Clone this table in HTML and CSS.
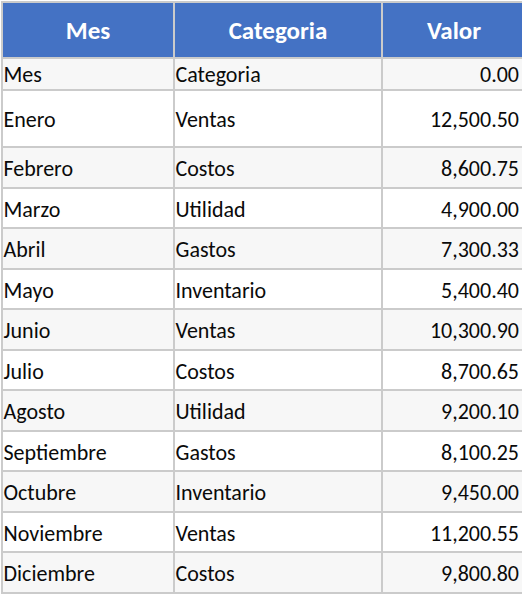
FILE: index.html
```html
<!DOCTYPE html>
<html lang="es">
<head>
<meta charset="utf-8">
<title>Tabla</title>
<link rel="stylesheet" href="styles.css">
</head>
<body>
<table class="grid">
  <colgroup>
    <col class="c-mes">
    <col class="c-cat">
    <col class="c-val">
  </colgroup>
  <thead>
    <tr class="head"><th>Mes</th><th>Categoria</th><th>Valor</th></tr>
  </thead>
  <tbody>
    <tr class="r-short"><td>Mes</td><td>Categoria</td><td class="num">0.00</td></tr>
    <tr class="r-tall"><td>Enero</td><td>Ventas</td><td class="num">12,500.50</td></tr>
    <tr><td>Febrero</td><td>Costos</td><td class="num">8,600.75</td></tr>
    <tr><td>Marzo</td><td>Utilidad</td><td class="num">4,900.00</td></tr>
    <tr><td>Abril</td><td>Gastos</td><td class="num">7,300.33</td></tr>
    <tr><td>Mayo</td><td>Inventario</td><td class="num">5,400.40</td></tr>
    <tr><td>Junio</td><td>Ventas</td><td class="num">10,300.90</td></tr>
    <tr><td>Julio</td><td>Costos</td><td class="num">8,700.65</td></tr>
    <tr><td>Agosto</td><td>Utilidad</td><td class="num">9,200.10</td></tr>
    <tr><td>Septiembre</td><td>Gastos</td><td class="num">8,100.25</td></tr>
    <tr><td>Octubre</td><td>Inventario</td><td class="num">9,450.00</td></tr>
    <tr><td>Noviembre</td><td>Ventas</td><td class="num">11,200.55</td></tr>
    <tr><td>Diciembre</td><td>Costos</td><td class="num">9,800.80</td></tr>
  </tbody>
</table>
</body>
</html>
```
FILE: styles.css
```css
html, body {
  margin: 0;
  padding: 0;
  background: #ffffff;
  overflow: hidden;
}
body {
  font-family: Carlito, Lato, "Liberation Sans", sans-serif;
  color: #0a0a0a;
}
.grid {
  border-collapse: collapse;
  table-layout: fixed;
  width: 524px;
  margin: 1px 0 0 1px;
}
.c-mes { width: 172px; }
.c-cat { width: 208px; }
.c-val { width: 144px; }
.grid th,
.grid td {
  border: 2px solid #cbcbcb;
  padding: 0 2px;
  white-space: nowrap;
  overflow: hidden;
}
.grid th {
  background: #4472c4;
  color: #ffffff;
  font-weight: 700;
  font-size: 25px;
  text-align: center;
  height: 54px;
  padding: 0;
}
.grid td {
  font-size: 22px;
  height: 36.5px;
  padding-top: 2px;
  padding-bottom: 0;
  padding-left: 0.5px;
}
.grid tbody tr:nth-child(odd) td {
  background: #f7f7f7;
}
.grid tbody tr:nth-child(even) td {
  background: #ffffff;
}
.grid tr.r-short td { height: 27.7px; }
.grid tr.r-tall td { height: 53.7px; }
.grid td.num {
  text-align: right;
  padding-right: 6px;
}
```
